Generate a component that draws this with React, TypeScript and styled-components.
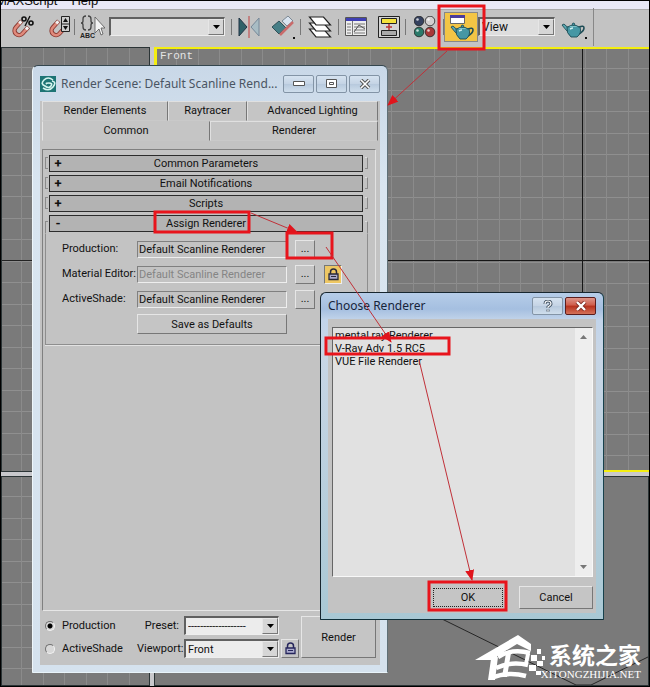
import React from "react";
import styled, { createGlobalStyle, css } from "styled-components";

const Global = createGlobalStyle`
  * { box-sizing: border-box; }
  body { margin: 0; background: #000; }
  body, button, select, input { font-family: Roboto, "Liberation Sans", Arial, sans-serif; font-size: 11px; color: #111; }
  button, select, input { margin: 0; padding: 0; border-radius: 0; }
`;

const raised = css`
  border: 1px solid;
  border-color: #e6e6e6 #777 #777 #e6e6e6;
`;
const sunken = css`
  border: 1px solid;
  border-color: #808080 #eee #eee #808080;
`;

/* ---------- application shell ---------- */
const Desktop = styled.div`
  position: relative;
  display: flex;
  flex-direction: column;
  height: 100vh;
  overflow: hidden;
  border: 1px solid #000;
  background: #7a7a7a;
`;
const MenuBar = styled.nav`
  display: flex;
  align-items: flex-end;
  gap: 14px;
  height: 8px;
  flex: none;
  overflow: hidden;
  background: #e8e8f6;
`;
const MenuLink = styled.a`
  color: #111;
  font: 13px/16px "Liberation Sans", Arial, sans-serif;
  text-decoration: none;
  margin-left: -5px;
  & + & { margin-left: 0; }
`;
const Toolbar = styled.header`
  display: flex;
  align-items: center;
  height: 38px;
  flex: none;
  padding-bottom: 4px;
  background: #c3c3c3;
  border-top: 1px solid #aaa;
`;
const ToolGroup = styled.div`
  display: flex;
  align-items: center;
  height: 38px;
  border-right: 1px solid #888;
`;
const ToolButton = styled.button<{ $w: number; $active?: boolean }>`
  width: ${(p) => p.$w}px;
  height: 30px;
  display: flex;
  align-items: center;
  justify-content: center;
  background: ${(p) => (p.$active ? "#f3c545" : "none")};
  border: ${(p) => (p.$active ? "1px solid #888" : "0")};
`;
const Divider = styled.span`
  width: 1px;
  height: 16px;
  background: #777;
`;

/* ---------- viewports ---------- */
const Viewports = styled.main`
  flex: 1;
  min-height: 0;
  display: grid;
  grid-template-columns: 149px 1fr;
  grid-template-rows: 425px 1fr;
  gap: 4px;
  background: #c8c8cc;
`;
const Viewport = styled.section<{ $active?: boolean; $plain?: boolean }>`
  display: grid;
  overflow: hidden;
  border: ${(p) => (p.$active ? "2px solid #f4ee10" : "1px solid #2b3436")};
  ${(p) => p.$active && "border-left-width: 3px; border-right: 0;"}
  background-color: #7a7a7a;
  ${(p) =>
    !p.$plain &&
    css`
      background-image: repeating-linear-gradient(to right, transparent 0 19px, #8b8b8b 19px 20px, transparent 20px 41px, #8b8b8b 41px 42px, transparent 42px 43px),
        repeating-linear-gradient(to bottom, transparent 0 19px, #8f8f8f 19px 20px, transparent 20px 41px, #8f8f8f 41px 42px, transparent 42px 43px);
    `}
  & > * { grid-area: 1 / 1; }
`;
const ViewName = styled.span`
  padding: 1px 3px;
  font: 11px/12px "Liberation Mono", monospace;
  color: #e4e4e4;
`;
const ViewLines = styled.svg`
  width: 100%;
  height: 100%;
  display: block;
  overflow: visible;
`;

/* ---------- windows ---------- */
const RenderWindow = styled.section`
  position: absolute;
  left: 31px;
  top: 64px;
  width: 356px;
  display: flex;
  flex-direction: column;
  padding: 0 7px 7px;
  background: linear-gradient(#c9d8e8 0, #d9e5f0 120px, #d5e2ee);
  border: 1px solid;
  border-color: #34464e #5f7077 #e9f4fa #eef6fa;
  border-radius: 6px 6px 1px 1px;
`;
const ChooseWindow = styled(RenderWindow)`
  left: 319px;
  top: 291px;
  width: 284px;
  padding: 0 7px 6px;
  background: linear-gradient(#b6cde8 0, #a5bfe0 16px, #c2d4ea 27px, #c8d6e6 60px, #a9c8d4);
  border-color: #17262f #17414c #10303a #17262f;
`;
const TitleBar = styled.header<{ $h: number }>`
  display: flex;
  align-items: center;
  height: ${(p) => p.$h}px;
  gap: 2px;
`;
const Title = styled.h1<{ $strong?: boolean }>`
  flex: 1;
  min-width: 0;
  margin: 0;
  padding-left: ${(p) => (p.$strong ? 0 : 3)}px;
  white-space: nowrap;
  font: 400 12px/18px "Noto Sans", "Open Sans", sans-serif;
  color: ${(p) => (p.$strong ? "#17243a" : "#4a5563")};
`;
const WinButton = styled.button<{ $close?: boolean }>`
  width: 31px;
  height: 18px;
  flex: none;
  display: flex;
  align-items: center;
  justify-content: center;
  border: 1px solid ${(p) => (p.$close ? "#5b1d1d" : "#8394a6")};
  border-radius: 2px;
  background: ${(p) =>
    p.$close ? "linear-gradient(#dd958a, #cf5d4b 45%, #b6301c 50%, #d4725a)" : "linear-gradient(#d6e3f0, #c4d3e4 50%, #b7c9dd 51%, #cfdeec)"};
`;
const Client = styled.div`
  flex: 1;
  display: flex;
  flex-direction: column;
  background: #c3c3c3;
`;

/* ---------- render scene contents ---------- */
const TabRow = styled.div<{ $cols: string }>`
  display: grid;
  grid-template-columns: ${(p) => p.$cols};
  height: 20px;
  margin: 0 2px;
`;
const Tab = styled.button<{ $selected?: boolean }>`
  background: #c5c5c5;
  border: 1px solid;
  border-color: ${(p) => (p.$selected ? "#c5c5c5 #777 #c5c5c5 #e4e4e4" : "#e0e0e0 #777 #c9c9c9 #e0e0e0")};
  line-height: 16px;
`;
const Panel = styled.div`
  height: 462px;
  margin: 8px 4px 0 2px;
  padding: 3px 7px 0 2px;
  border: 1px solid;
  border-color: #808080 #e2e2e2 #e6e6e6 #808080;
`;
const Rollout = styled.div`
  display: grid;
  grid-template-columns: 3px 1fr 4px;
  column-gap: 1px;
  align-items: center;
  height: 20px;
`;
const Bracket = styled.span<{ $right?: boolean; $open?: boolean }>`
  height: 12px;
  width: 3px;
  border: 1px solid #8a8a8a;
  ${(p) => (p.$right ? "border-left: 0; margin-left: 1px; border-top-color: #ddd;" : "border-right: 0;")}
  ${(p) => p.$open && "border-bottom: 0; align-self: end;"}
`;
const RolloutButton = styled.button`
  display: grid;
  grid-template-columns: 16px 1fr 16px;
  align-items: center;
  height: 17px;
  border: 1px solid #2c2c2c;
  background: #b3b3b3;
  line-height: 15px;
`;
const Sign = styled.span`
  font-weight: 700;
  font-size: 13px;
`;
const Group = styled.div`
  display: grid;
  grid-template-columns: 75px 150px 28px 35px;
  grid-auto-rows: 18px;
  row-gap: 7px;
  align-items: center;
  padding: 6px 0 11px 16px;
  border: 1px solid;
  border-color: transparent #8e8e8e #8e8e8e #8e8e8e;
  box-shadow: 0 1px 0 #e2e2e2;
`;
const Label = styled.label`
  white-space: nowrap;
  line-height: 14px;
`;
const Field = styled.input`
  width: 150px;
  height: 17px;
  padding: 0 1px;
  background: #c3c3c3;
  ${sunken}
  &:disabled { color: #858585; }
`;
const Push = styled.button`
  ${raised}
  background: #c5c5c5;
  min-height: 19px;
`;
const DotsButton = styled(Push)`
  width: 20px;
  margin-left: 8px;
  line-height: 14px;
`;
const LockButton = styled(Push)<{ $on?: boolean }>`
  width: 18px;
  height: 19px;
  display: flex;
  align-items: center;
  justify-content: center;
  margin-left: ${(p) => (p.$on ? 9 : 0)}px;
  ${(p) => p.$on && "background: #eec763; border-color: #777 #eee #eee #777;"}
`;
const SaveButton = styled(Push)`
  grid-column: 2;
  height: 20px;
`;
const Footer = styled.div`
  display: grid;
  grid-template-columns: 91px 45px 95px 18px 75px;
  grid-template-rows: 19px 19px;
  row-gap: 4px;
  column-gap: 2px;
  align-items: center;
  padding: 5px 2px 7px 4px;
`;
const Choice = styled.label`
  display: flex;
  align-items: center;
  gap: 7px;
  padding-left: 1px;
`;
const Radio = styled.input`
  appearance: none;
  width: 10px;
  height: 10px;
  border: 1px solid;
  border-color: #707070 #f2f2f2 #f2f2f2 #707070;
  border-radius: 50%;
  background: #d8d8d8;
  &:checked { background: radial-gradient(circle, #000 0 2px, #d8d8d8 3px); }
`;
const RightLabel = styled(Label)`
  text-align: right;
  padding-right: 3px;
`;
const SelectBox = styled.div<{ $w: number; $grey?: boolean }>`
  display: flex;
  width: ${(p) => p.$w}px;
  height: 19px;
  border: 1px solid;
  border-width: 2px 1px 1px 2px;
  border-color: #606060 #eee #eee #606060;
  background: ${(p) => (p.$grey ? "#dedede" : "#ececec")};
`;
const Select = styled.select<{ $large?: boolean }>`
  appearance: none;
  flex: 1;
  min-width: 0;
  border: 0;
  padding-left: 2px;
  background: transparent;
  line-height: 15px;
  ${(p) => p.$large && "font-size: 12px;"}
`;
const Arrow = styled.span`
  width: 16px;
  display: flex;
  align-items: center;
  justify-content: center;
  background: #d6d6d6;
  pointer-events: none;
  ${raised}
`;
const RenderButton = styled(Push)`
  grid-column: 5;
  grid-row: 1 / 3;
  height: 42px;
`;

/* ---------- choose renderer contents ---------- */
const ListBox = styled.div`
  display: flex;
  height: 250px;
  margin: 8px 3px 0 4px;
  background: #e1e1e1;
  border: 1px solid;
  border-color: #666 #f8f8f8 #f8f8f8 #666;
`;
const Items = styled.ul`
  flex: 1;
  margin: 0;
  padding: 1px 2px;
  list-style: none;
`;
const Item = styled.li`
  line-height: 13px;
`;
const Scroll = styled.div`
  width: 17px;
  display: flex;
  flex-direction: column;
  justify-content: space-between;
  align-items: center;
  padding: 4px 0;
  background: #eeeeee;
`;
const ScrollButton = styled.button`
  display: flex;
  padding: 3px;
  border: 0;
  background: none;
`;
const Actions = styled.div`
  display: flex;
  justify-content: flex-end;
  align-items: center;
  gap: 14px;
  padding: 9px 3px 4px;
`;
const ActionButton = styled(Push)<{ $focus?: boolean }>`
  width: 74px;
  height: 23px;
  ${(p) => p.$focus && "outline: 1px dotted #222; outline-offset: -3px; border-color: #c3c3c3;"}
`;

/* ---------- overlays ---------- */
const Marks = styled.svg`
  position: absolute;
  left: -1px;
  top: -1px;
  pointer-events: none;
`;
const Brand = styled.div`
  position: absolute;
  right: 8px;
  bottom: 5px;
  display: flex;
  align-items: flex-end;
  color: #fff;
`;
const BrandText = styled.div`
  display: flex;
  flex-direction: column;
  align-items: flex-end;
  margin-left: -4px;
`;
const BrandName = styled.strong`
  font: 700 23px/28px "Noto Sans CJK SC", sans-serif;
`;
const BrandUrl = styled.span`
  font: 11px/13px "Liberation Serif", serif;
`;

/* ---------- icons ---------- */
const Magnet = () => (
  <g transform="rotate(42 9 17)">
    <path d="M5 7v9a4.500 4.500 0 0 0 9 0V7" fill="none" stroke="#8a3a33" strokeWidth="4.400" />
    <path d="M5 10v6a4.500 4.500 0 0 0 9 0v-6" fill="none" stroke="#e08a7c" strokeWidth="2.600" />
    <path d="M5 7.600v3M14 7.600v3" stroke="#f2f2f2" strokeWidth="3" />
  </g>
);
const MagnetPercent = () => (
  <svg width="26" height="26" viewBox="0 0 26 26">
    <Magnet />
    <circle cx="15" cy="5" r="2" fill="none" stroke="#111" strokeWidth="1.600" />
    <circle cx="22" cy="9" r="2" fill="none" stroke="#111" strokeWidth="1.600" />
    <path d="M21 2l-5 10" stroke="#111" strokeWidth="1.400" />
  </svg>
);
const MagnetSpinner = () => (
  <svg width="26" height="26" viewBox="0 0 26 26">
    <Magnet />
    <path d="M15.500 2.500h8v15h-8zM15.500 10h8" fill="#ccc" stroke="#222" />
    <path d="M17 8l2.500-4L22 8zM17 12h5l-2.500 4z" fill="#111" />
  </svg>
);
const NamedSets = () => (
  <svg width="26" height="26" viewBox="0 0 26 26">
    <path d="M7 2q-3 0-3 3v2q0 2-2 2q2 0 2 2v2q0 3 3 3M9 2q3 0 3 3v2q0 2 2 2q-2 0-2 2v2q0 3-3 3" fill="none" stroke="#444" strokeWidth="1.300" />
    <text x="1" y="24" fontSize="7" fontWeight="700" fill="#222" fontFamily="Liberation Sans">ABC</text>
    <path d="M16 3v16l4-4 2 6 2-1-2-6h4z" fill="#f4f4f4" stroke="#555" strokeWidth=".8" />
  </svg>
);
const Mirror = () => (
  <svg width="22" height="24" viewBox="0 0 22 24">
    <path d="M1 3v18L9 12z" fill="#2e6168" stroke="#234" />
    <path d="M21 3v18l-8-9z" fill="#a8bcc4" stroke="#789" />
    <path d="M11 1v22" stroke="#c25555" strokeWidth="1.200" />
  </svg>
);
const Align = () => (
  <svg width="26" height="26" viewBox="0 0 26 26">
    <path d="M2 13l7-6 7 7-7 6z" fill="#467e86" stroke="#2f5058" />
    <path d="M12 7l6-5 5 5-6 5z" fill="#d9e3ef" stroke="#7b8894" />
    <path d="M10 21L23 8" stroke="#c96b6b" strokeWidth="2.500" />
    <path d="M23 23h2v2h-2z" fill="#111" />
  </svg>
);
const Layers = () => (
  <svg width="24" height="24" viewBox="0 0 24 24">
    {[13, 7, 1].map((y) => (
      <path key={y} d={`M1.500 ${y + 1}h14l7 8H8z`} fill="#fff" stroke="#222" strokeWidth="1.200" />
    ))}
  </svg>
);
const CurveEditor = () => (
  <svg width="22" height="19" viewBox="0 0 22 19">
    <path d="M.5.500h21v18H.5z" fill="#eee" stroke="#555" />
    <path d="M1 1h20v3H1z" fill="#4040b4" />
    <path d="M7.500 4v14M2 7h4M2 10h4M2 13h4M2 16h4M9 7h11M9 10h11M9 13h11M9 16h11" stroke="#777" />
    <path d="M9 15l5-7 6 4" fill="none" stroke="#555" />
  </svg>
);
const Schematic = () => (
  <svg width="22" height="22" viewBox="0 0 22 22">
    <path d="M.5.500h21v21H.5z" fill="#d4d4d4" stroke="#222" />
    <path d="M3.500 2.500h15v5h-15z" fill="#f4e23c" stroke="#222" />
    <path d="M3.500 14.500h15v5h-15z" fill="#aaa" stroke="#222" />
    <path d="M11 8v6M8 11h6" stroke="#b33" strokeWidth="1.500" />
  </svg>
);
const Materials = () => (
  <svg width="22" height="22" viewBox="0 0 22 22">
    {[
      [5, 5, "#35415f"],
      [16, 5, "#d3cfd0"],
      [5, 16, "#2b7a6a"],
      [16, 16, "#a83838"],
    ].map(([x, y, c]) => (
      <g key={`${x}${y}`}>
        <circle cx={x} cy={y} r="4.800" fill={c as string} stroke="#222" strokeWidth=".8" />
        <circle cx={Number(x) - 1.5} cy={Number(y) - 1.5} r="1.300" fill="#fff" opacity=".75" />
      </g>
    ))}
  </svg>
);
const Pot = () => (
  <g stroke="#1d4c55" strokeWidth=".9">
    <path d="M6 10Q3 7 0 3l2-1q3 3 6 5z" fill="#58a6b0" />
    <path d="M17 5q5-2 5 1t-5 6" fill="none" strokeWidth="1.600" />
    <path d="M5 5q7-3 13 0 2 6-3 10H9Q4 11 5 5z" fill="#4697a4" />
    <path d="M6 5q5-4 11 0" fill="#7cc3ca" />
    <circle cx="11.500" cy="2.300" r="1.200" fill="#4697a4" />
    <path d="M8 7q2-1 3-1" stroke="#cdeef0" strokeWidth="1.500" />
  </g>
);
const RenderSceneIcon = () => (
  <svg width="26" height="26" viewBox="0 0 26 26">
    <path d="M2.500 1.500h14v8h-14z" fill="#fff" stroke="#666" />
    <path d="M2 1h15v3H2z" fill="#4b3c9c" />
    <g transform="translate(3 10)"><Pot /></g>
  </svg>
);
const QuickRender = () => (
  <svg width="28" height="26" viewBox="0 0 28 26">
    <g transform="translate(2 8)"><Pot /></g>
    <path d="M25 23h2v2h-2z" fill="#111" />
  </svg>
);
const AppIcon = () => (
  <svg width="16" height="16" viewBox="0 0 16 16">
    <path d="M0 0h16v16H0z" fill="#1d7474" />
    <path d="M13 4Q8 0 4 4t1 6q4 3 6 0t-2-3-2 1M3 12q6 4 10-1t-1-6" fill="none" stroke="#d4f4ee" strokeWidth="1.600" />
  </svg>
);
const Lock = ({ color = "#26265c" }: { color?: string }) => (
  <svg width="11" height="13" viewBox="0 0 11 13">
    <path d="M2.500 6V4q0-3 3-3t3 3v2" fill="none" stroke={color} strokeWidth="1.500" />
    <path d="M1 6h9v5.500H1z" fill="#aaaacc" stroke={color} strokeWidth="1.300" />
    <path d="M3 8.500h5" stroke={color} />
  </svg>
);
const Tri = ({ up, grey }: { up?: boolean; grey?: boolean }) => (
  <svg width="7" height="4" viewBox="0 0 7 4">
    <path d={up ? "M0 4h7L3.500 0z" : "M0 0h7L3.500 4z"} fill={grey ? "#777" : "#000"} />
  </svg>
);
const BrandLogo = () => (
  <svg width="70" height="46" viewBox="0 0 70 46">
    <path d="M0 25L43 0l13 9v7L42 9 22 21v4z" fill="#fff" />
    <path d="M16 24l7-2-3 23h-7zM31 18h5l-4 24h-5z" fill="#fff" />
    <path d="M23 22q14-9 32-4M21 33q15-7 32-3M16 43q17-7 35-2" fill="none" stroke="#fff" strokeWidth="4.500" />
    <path d="M51 19h4l-2 10h-4zM56 20h6v6h-6zM62 14h4v5h-4zM62 26h6v5h-6zM54 30h7v6h-7zM61 36h5v4h-5zM67 21h3v4h-3z" fill="#fff" />
  </svg>
);

const rollouts = ["Common Parameters", "Email Notifications", "Scripts", "Assign Renderer"];
const boxes = [
  [439, 6, 45, 43],
  [155, 212, 94, 20],
  [287, 233, 45, 25],
  [326, 338, 123, 16],
  [429, 582, 77, 28],
];
const arrows = [
  [447, 51, 388, 105],
  [251, 213, 297, 232],
  [326, 247, 391, 342],
  [419, 360, 472, 580],
];

export default function App() {
  return (
    <>
      <Global />
      <Desktop>
        <MenuBar>
          <MenuLink href="#script">MAXScript</MenuLink>
          <MenuLink href="#help">Help</MenuLink>
        </MenuBar>
        <Toolbar>
          <ToolGroup>
            <ToolButton $w={42} aria-label="Percent snap"><MagnetPercent /></ToolButton>
            <ToolButton $w={31} aria-label="Spinner snap"><MagnetSpinner /></ToolButton>
            <Divider />
            <ToolButton $w={34} aria-label="Named selection sets"><NamedSets /></ToolButton>
            <SelectBox $w={116} $grey>
              <Select aria-label="Selection set"><option></option></Select>
              <Arrow><Tri /></Arrow>
            </SelectBox>
            <ToolButton $w={6} aria-hidden tabIndex={-1} />
            <Divider />
            <ToolButton $w={34} aria-label="Mirror"><Mirror /></ToolButton>
            <ToolButton $w={34} aria-label="Align"><Align /></ToolButton>
            <Divider />
            <ToolButton $w={37} aria-label="Layer manager"><Layers /></ToolButton>
            <Divider />
            <ToolButton $w={34} aria-label="Curve editor"><CurveEditor /></ToolButton>
            <ToolButton $w={32} aria-label="Schematic view"><Schematic /></ToolButton>
            <Divider />
            <ToolButton $w={37} aria-label="Material editor"><Materials /></ToolButton>
            <Divider />
            <ToolButton $w={34} $active aria-label="Render scene"><RenderSceneIcon /></ToolButton>
            <SelectBox $w={77} $grey>
              <Select $large aria-label="Render type"><option>View</option></Select>
              <Arrow><Tri /></Arrow>
            </SelectBox>
            <ToolButton $w={38} aria-label="Quick render"><QuickRender /></ToolButton>
          </ToolGroup>
        </Toolbar>

        <Viewports>
          <Viewport>
            <ViewLines><path d="M0 212.500H150" stroke="#222" /></ViewLines>
          </Viewport>
          <Viewport $active>
            <ViewLines><path d="M0 211.500H500M425.500 0V430" stroke="#161616" /></ViewLines>
            <ViewName>Front</ViewName>
          </Viewport>
          <Viewport />
          <Viewport $plain>
            <ViewLines>
              <path d="M287 142L421 208H436L495 179" fill="none" stroke="#262626" />
            </ViewLines>
          </Viewport>
        </Viewports>

        <RenderWindow aria-label="Render Scene">
          <TitleBar $h={35}>
            <AppIcon />
            <Title>Render Scene: Default Scanline Rend...</Title>
            <WinButton aria-label="Minimize">
              <svg width="12" height="6"><path d="M.5.500h11v4H.5z" fill="#fff" stroke="#555" /></svg>
            </WinButton>
            <WinButton aria-label="Maximize">
              <svg width="11" height="9"><path d="M.5.500h10v8H.5z" fill="#fff" stroke="#555" /><path d="M3.500 3.500h4v2h-4z" fill="none" stroke="#555" /></svg>
            </WinButton>
            <WinButton aria-label="Close">
              <svg width="12" height="10"><path d="M2 1l8 8M10 1L2 9" stroke="#555" strokeWidth="3.600" /><path d="M2 1l8 8M10 1L2 9" stroke="#fff" strokeWidth="1.600" /></svg>
            </WinButton>
          </TitleBar>
          <Client>
            <TabRow $cols="126px 79px 1fr">
              <Tab>Render Elements</Tab>
              <Tab>Raytracer</Tab>
              <Tab>Advanced Lighting</Tab>
            </TabRow>
            <TabRow $cols="1fr 1fr">
              <Tab $selected>Common</Tab>
              <Tab>Renderer</Tab>
            </TabRow>
            <Panel>
              {rollouts.map((name, i) => (
                <Rollout key={name}>
                  <Bracket $open={i === 3} />
                  <RolloutButton>
                    <Sign>{i === 3 ? "-" : "+"}</Sign>
                    <span>{name}</span>
                  </RolloutButton>
                  <Bracket $right $open={i === 3} />
                </Rollout>
              ))}
              <Group>
                <Label htmlFor="prod">Production:</Label>
                <Field id="prod" readOnly value="Default Scanline Renderer" />
                <DotsButton aria-label="Choose production renderer">...</DotsButton>
                <span />
                <Label htmlFor="mat">Material Editor:</Label>
                <Field id="mat" disabled value="Default Scanline Renderer" />
                <DotsButton aria-label="Choose material renderer">...</DotsButton>
                <LockButton $on aria-label="Lock"><Lock color="#2a2a3a" /></LockButton>
                <Label htmlFor="shade">ActiveShade:</Label>
                <Field id="shade" readOnly value="Default Scanline Renderer" />
                <DotsButton aria-label="Choose ActiveShade renderer">...</DotsButton>
                <span />
                <SaveButton>Save as Defaults</SaveButton>
              </Group>
            </Panel>
            <Footer>
              <Choice><Radio type="radio" name="mode" defaultChecked />Production</Choice>
              <RightLabel htmlFor="preset">Preset:</RightLabel>
              <SelectBox $w={95}>
                <Select id="preset"><option>-------------------</option></Select>
                <Arrow><Tri /></Arrow>
              </SelectBox>
              <span />
              <RenderButton>Render</RenderButton>
              <Choice><Radio type="radio" name="mode" />ActiveShade</Choice>
              <RightLabel htmlFor="view">Viewport:</RightLabel>
              <SelectBox $w={95}>
                <Select id="view"><option>Front</option></Select>
                <Arrow><Tri /></Arrow>
              </SelectBox>
              <LockButton aria-label="Lock viewport"><Lock /></LockButton>
            </Footer>
          </Client>
        </RenderWindow>

        <ChooseWindow aria-label="Choose Renderer">
          <TitleBar $h={26}>
            <Title $strong>Choose Renderer</Title>
            <WinButton aria-label="Help">
              <svg width="10" height="12"><path d="M2 4q0-3 3-3t3 3q0 1-3 3v1M5 9.500v2" fill="none" stroke="#456" strokeWidth="3" /><path d="M2 4q0-3 3-3t3 3q0 1-3 3v1M5 9.500v2" fill="none" stroke="#fff" strokeWidth="1.200" /></svg>
            </WinButton>
            <WinButton $close aria-label="Close">
              <svg width="12" height="10"><path d="M2 1l8 8M10 1L2 9" stroke="#7d2b23" strokeWidth="4" /><path d="M2 1l8 8M10 1L2 9" stroke="#fff" strokeWidth="2.400" /></svg>
            </WinButton>
          </TitleBar>
          <Client>
            <ListBox>
              <Items>
                <Item>mental ray Renderer</Item>
                <Item>V-Ray Adv 1.5 RC5</Item>
                <Item>VUE File Renderer</Item>
              </Items>
              <Scroll>
                <ScrollButton aria-label="Scroll up"><Tri up grey /></ScrollButton>
                <ScrollButton aria-label="Scroll down"><Tri grey /></ScrollButton>
              </Scroll>
            </ListBox>
            <Actions>
              <ActionButton $focus>OK</ActionButton>
              <ActionButton>Cancel</ActionButton>
            </Actions>
          </Client>
        </ChooseWindow>

        <Marks width="650" height="687" viewBox="0 0 650 687">
          <defs>
            <marker id="head" markerWidth="12" markerHeight="10" refX="10" refY="4.500" orient="auto" markerUnits="userSpaceOnUse">
              <path d="M0 0l11 4.500L0 9z" fill="#e0141c" />
            </marker>
          </defs>
          {boxes.map(([x, y, w, h]) => (
            <rect key={`${x}-${y}`} x={x} y={y} width={w} height={h} fill="none" stroke="#e8141c" strokeWidth="3" />
          ))}
          {arrows.map(([a, b, c, d]) => (
            <path key={`${a}-${b}`} d={`M${a} ${b}L${c} ${d}`} stroke="#c03038" strokeWidth="1" markerEnd="url(#head)" />
          ))}
        </Marks>

        <Brand>
          <BrandLogo />
          <BrandText>
            <BrandName>系统之家</BrandName>
            <BrandUrl>XITONGZHIJIA.NET</BrandUrl>
          </BrandText>
        </Brand>
      </Desktop>
    </>
  );
}
